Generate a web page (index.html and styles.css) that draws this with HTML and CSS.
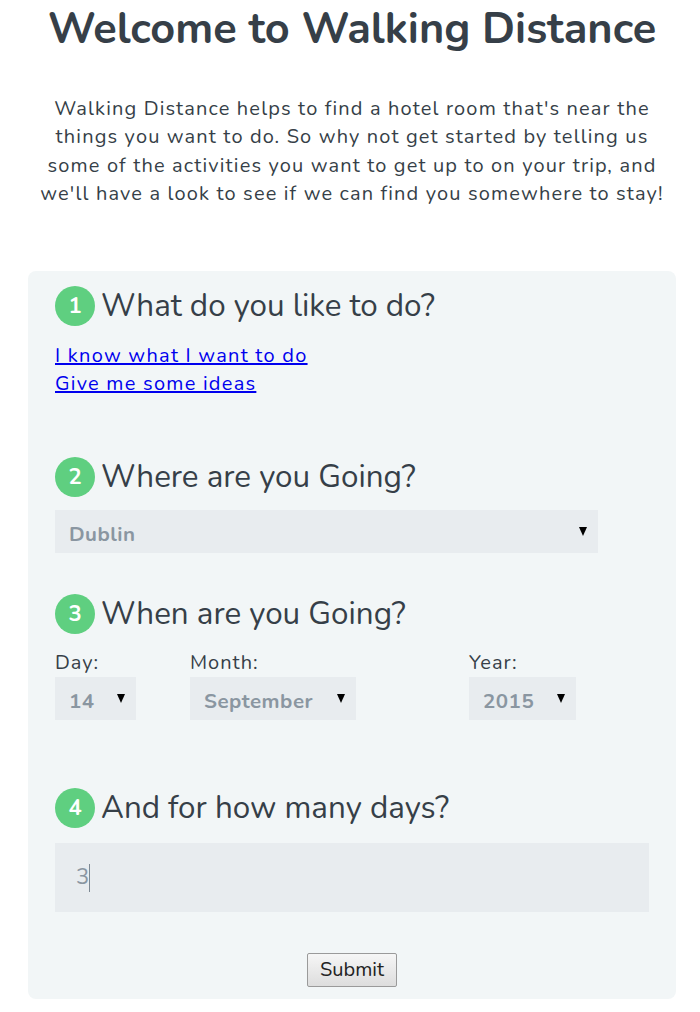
FILE: index.html
```html
<!DOCTYPE html>
<html lang="en">
<head>
<meta charset="utf-8">
<title>Walking Distance</title>
<link rel="stylesheet" href="styles.css">
</head>
<body>
<main class="page">
  <h1 class="title">Welcome to Walking Distance</h1>
  <p class="intro">Walking Distance helps to find a hotel room that's near the<br>things you want to do. So why not get started by telling us<br>some of the activities you want to get up to on your trip, and<br>we'll have a look to see if we can find you somewhere to stay!</p>

  <form class="card">
    <section class="step step-1">
      <h2 class="step-head"><span class="num">1</span>What do you like to do?</h2>
      <div class="links">
        <a href="#">I know what I want to do</a>
        <a href="#">Give me some ideas</a>
      </div>
    </section>

    <section class="step step-2">
      <h2 class="step-head"><span class="num">2</span>Where are you Going?</h2>
      <span class="select-wrap wide"><select class="select"><option>Dublin</option></select></span>
    </section>

    <section class="step step-3">
      <h2 class="step-head"><span class="num">3</span>When are you Going?</h2>
      <div class="date-grid">
        <label class="field">Day:
          <span class="select-wrap day"><select class="select"><option>14</option></select></span>
        </label>
        <label class="field">Month:
          <span class="select-wrap month"><select class="select"><option>September</option></select></span>
        </label>
        <label class="field">Year:
          <span class="select-wrap year"><select class="select"><option>2015</option></select></span>
        </label>
      </div>
    </section>

    <section class="step step-4">
      <h2 class="step-head"><span class="num">4</span>And for how many days?</h2>
      <span class="input-wrap"><input class="days" type="text" value="3"><span class="caret"></span></span>
    </section>

    <div class="actions">
      <button class="submit" type="button">Submit</button>
    </div>
  </form>
</main>
</body>
</html>
```

FILE: styles.css
```css
* { box-sizing: border-box; }

html, body {
  margin: 0;
  padding: 0;
  background: #ffffff;
}

body {
  font-family: "Nunito", "Lato", "Open Sans", sans-serif;
  color: #363f48;
}

.page {
  width: 648px;
  margin-left: 28px;
}

.title {
  margin: 0;
  font-size: 43.3px;
  line-height: 58px;
  font-weight: 700;
  text-align: center;
}

.intro {
  margin: 37px 0 0;
  font-size: 20px;
  line-height: 28.4px;
  letter-spacing: 1.15px;
  text-align: center;
}

.card {
  margin-top: 62px;
  background: #f2f6f7;
  border-radius: 8px;
  padding: 15px 27px 12px;
}

.step-head {
  display: flex;
  align-items: center;
  margin: 0;
  height: 40px;
  font-size: 31.4px;
  font-weight: 400;
}

.num {
  width: 40px;
  height: 40px;
  border-radius: 50%;
  background: #5fcf80;
  color: #ffffff;
  font-size: 22px;
  font-weight: 700;
  display: flex;
  align-items: center;
  justify-content: center;
  margin-right: 6px;
  flex: none;
}

.links {
  display: flex;
  flex-direction: column;
  align-items: flex-start;
  margin-top: 16px;
  font-size: 20px;
  line-height: 28px;
  letter-spacing: 1.25px;
}

.links a { color: #0000ee; }

.step-2 { margin-top: 59px; }
.step-3 { margin-top: 41px; }
.step-4 { margin-top: 68px; }

.step-2 .select-wrap { margin-top: 13px; }

.select-wrap {
  position: relative;
  display: block;
  height: 43px;
  background: #e8ecef;
}

.select-wrap::after {
  content: "";
  position: absolute;
  right: 11px;
  top: 17px;
  border-left: 4.5px solid transparent;
  border-right: 4.5px solid transparent;
  border-top: 9px solid #000000;
  pointer-events: none;
}

.select-wrap.wide { width: 543px; }
.select-wrap.day { width: 81px; }
.select-wrap.month { width: 166px; }
.select-wrap.year { width: 107px; }

.select {
  -webkit-appearance: none;
  appearance: none;
  width: 100%;
  height: 100%;
  border: 0;
  background: transparent;
  padding: 5px 26px 0 14px;
  font: inherit;
  font-size: 20.5px;
  font-weight: 700;
  letter-spacing: 0.5px;
  color: #8a96a1;
  outline: none;
}

.date-grid {
  display: grid;
  grid-template-columns: 135px 279px auto;
  margin-top: 15px;
}

.field {
  display: flex;
  flex-direction: column;
  font-size: 20px;
  line-height: 28px;
  letter-spacing: 1px;
}

.input-wrap {
  position: relative;
  display: block;
  margin-top: 15px;
  height: 69px;
  width: 594px;
  background: #e8ecef;
}

.days {
  width: 100%;
  height: 100%;
  border: 0;
  background: transparent;
  padding: 0 21px;
  font: inherit;
  font-size: 22px;
  color: #8a96a1;
  outline: none;
}

.caret {
  position: absolute;
  left: 34px;
  top: 21px;
  width: 1px;
  height: 28px;
  background: #7d8993;
}

.actions {
  display: flex;
  justify-content: center;
  margin-top: 41px;
}

.submit {
  width: 90px;
  height: 34px;
  padding: 0;
  font: inherit;
  font-size: 20px;
  color: #222222;
  border: 1px solid #9a9a9a;
  border-radius: 2px;
  background: linear-gradient(#f6f6f6, #dddddd);
}
```
